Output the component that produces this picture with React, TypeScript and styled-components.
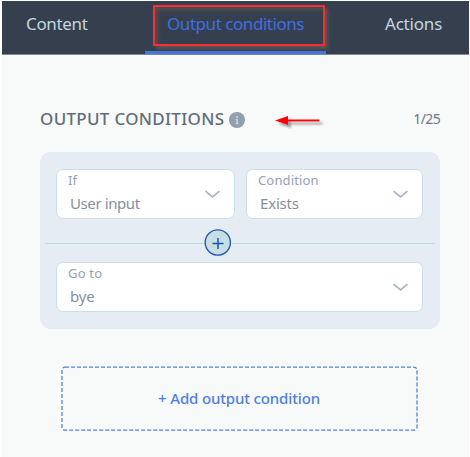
import React from "react";
import styled, { createGlobalStyle } from "styled-components";

const GlobalStyle = createGlobalStyle`
  * { box-sizing: border-box; }
  body { margin: 0; background: #fff; font-family: "Noto Sans", sans-serif; overflow: hidden; }
`;

const Page = styled.main`
  width: 467px;
  height: 456px;
  margin: 1px 0 0 2px;
  background: #f8faf9;
`;

const Tabs = styled.nav`
  display: grid;
  grid-template-columns: 143px 181px 143px;
  height: 54px;
  background: #363f4d;
  border-bottom: 1px solid #7f8794;
`;

const Tab = styled.div<{ $active?: boolean; $left: number }>`
  position: relative;
  padding: 11px 0 0 ${(p) => p.$left}px;
  border-bottom: ${(p) => (p.$active ? "3px solid #4279e0" : "0")};
  color: ${(p) => (p.$active ? "#3e6fe0" : "#c1d6e0")};
  white-space: nowrap;
`;

const Text = styled.span<{ $size: number; $spacing?: number; $weight?: number }>`
  display: inline-block;
  font-size: ${(p) => p.$size}px;
  letter-spacing: ${(p) => p.$spacing ?? 0}px;
  font-weight: ${(p) => p.$weight ?? 400};
  line-height: 24px;
  white-space: nowrap;
`;

const Highlight = styled.div`
  position: absolute;
  left: 8px;
  top: 4px;
  width: 172px;
  height: 41px;
  border: 2px solid #fb2d2f;
  box-shadow: 3px 3px 4px #5b5658, inset 3px 3px 4px #514e53;
`;

const Content = styled.section`
  padding: 52px 29px 0 38px;
`;

const Heading = styled.header`
  display: flex;
  align-items: center;
  height: 24px;
  color: #626e79;
`;

const InfoIcon = styled.svg`
  margin-left: 5px;
  margin-top: 2px;
`;

const Arrow = styled.svg`
  margin-left: 29px;
  margin-top: 3px;
`;

const Count = styled.div`
  margin-left: auto;
  color: #6d7783;
`;

const Card = styled.div`
  height: 177px;
  margin-top: 21px;
  padding: 17px 17px 0 16px;
  border-radius: 11px;
  background: #e5ecf4;
`;

const FieldRow = styled.div`
  display: grid;
  grid-template-columns: 179px 177px;
  gap: 11px;
`;

const Field = styled.div`
  position: relative;
  display: flex;
  flex-direction: column;
  height: 50px;
  padding: 0 0 0 11px;
  border: 1px solid #cde0e6;
  border-radius: 7px;
  background: #fff;
`;

const Label = styled.div`
  display: flex;
  align-items: center;
  height: 20px;
  color: #92a3b8;
`;

const Value = styled.div<{ $shift: number }>`
  padding-left: 2px;
  margin-top: ${(p) => p.$shift}px;
  line-height: 24px;
  color: #858f9f;
`;

const Chevron = styled.svg`
  position: absolute;
  right: 13px;
  top: 19px;
`;

const Divider = styled.div`
  display: flex;
  align-items: center;
  height: 28px;
  margin: 10px -12px 5px -11px;
  &::before, &::after { content: ""; height: 1px; background: #c5dbe3; }
  &::before { width: 159px; }
  &::after { flex: 1; }
`;

const PlusIcon = styled.svg`
  flex: none;
`;

const AddButton = styled.button`
  display: flex;
  align-items: center;
  justify-content: center;
  position: relative;
  width: 357px;
  height: 65px;
  margin: 37px 0 0 21px;
  padding: 0 1px 2px 0;
  border: 0;
  background: transparent;
  color: #4c80e5;
  font-family: inherit;
`;

const DashedFrame = styled.svg`
  position: absolute;
  inset: 0;
`;

interface SelectProps {
  label: string;
  value: string;
  labelSpacing: number;
  valueSpacing: number;
  shift?: number;
}

function Select({ label, value, labelSpacing, valueSpacing, shift = 1 }: SelectProps) {
  return (
    <Field>
      <Label><Text $size={13} $spacing={labelSpacing}>{label}</Text></Label>
      <Value $shift={shift}><Text $size={15} $spacing={valueSpacing}>{value}</Text></Value>
      <Chevron width="17" height="11" viewBox="0 0 17 11" fill="none">
        <path d="M1.5 2.2 L8.5 7.8 L15.5 2.2" stroke="#a5b4c7" strokeWidth="1.7" />
      </Chevron>
    </Field>
  );
}

export default function App() {
  return (
    <>
      <GlobalStyle />
      <Page>
        <Tabs>
          <Tab $left={24}><Text $size={17} $spacing={-0.35}>Content</Text></Tab>
          <Tab $left={22} $active>
            <Highlight />
            <Text $size={17} $spacing={-0.45}>Output conditions</Text>
          </Tab>
          <Tab $left={59}><Text $size={17} $spacing={-0.2}>Actions</Text></Tab>
        </Tabs>
        <Content>
          <Heading>
            <Text $size={17} $spacing={0.3} $weight={500}>OUTPUT CONDITIONS</Text>
            <InfoIcon width="16" height="16" viewBox="0 0 16 16">
              <circle cx="8" cy="8" r="8" fill="#909fa9" />
              <path d="M7 4h2v1.7H7zM6.5 7H9v4.2h.8v1H6.4v-1h.8V8h-.7z" fill="#c8d1d6" />
            </InfoIcon>
            <Arrow width="54" height="16" viewBox="0 0 54 16">
              <defs>
                <filter id="arrow-shadow" x="-10%" y="-30%" width="130%" height="200%">
                  <feDropShadow dx="3" dy="3" stdDeviation="1.2" floodColor="#555" floodOpacity=".55" />
                </filter>
              </defs>
              <path d="M1 7.5 L14 3 V6.5 H45.5 V8.5 H14 V12 Z" fill="#ff0408" filter="url(#arrow-shadow)" />
            </Arrow>
            <Count><Text $size={14} $spacing={-0.65}>1/25</Text></Count>
          </Heading>
          <Card>
            <FieldRow>
              <Select label="If" value="User input" labelSpacing={0.2} valueSpacing={-0.4} />
              <Select label="Condition" value="Exists" labelSpacing={0.15} valueSpacing={-0.2} />
            </FieldRow>
            <Divider>
              <PlusIcon width="28" height="28" viewBox="0 0 28 28" fill="none">
                <circle cx="13.8" cy="13.5" r="12.6" fill="#c7dee5" stroke="#245bb3" strokeWidth="1.4" />
                <path d="M8.5 14.5h11M14 9v11" stroke="#1455b4" strokeWidth="1.5" />
              </PlusIcon>
            </Divider>
            <Select label="Go to" value="bye" labelSpacing={0.2} valueSpacing={-0.2} />
          </Card>
          <AddButton>
            <DashedFrame width="357" height="65" fill="none">
              <rect x="1" y="1.2" width="355" height="63" rx="3" stroke="#4d83e6" strokeWidth="1.3" strokeDasharray="4 2" />
            </DashedFrame>
            <Text $size={15} $spacing={-0.15} $weight={500}>+ Add output condition</Text>
          </AddButton>
        </Content>
      </Page>
    </>
  );
}
